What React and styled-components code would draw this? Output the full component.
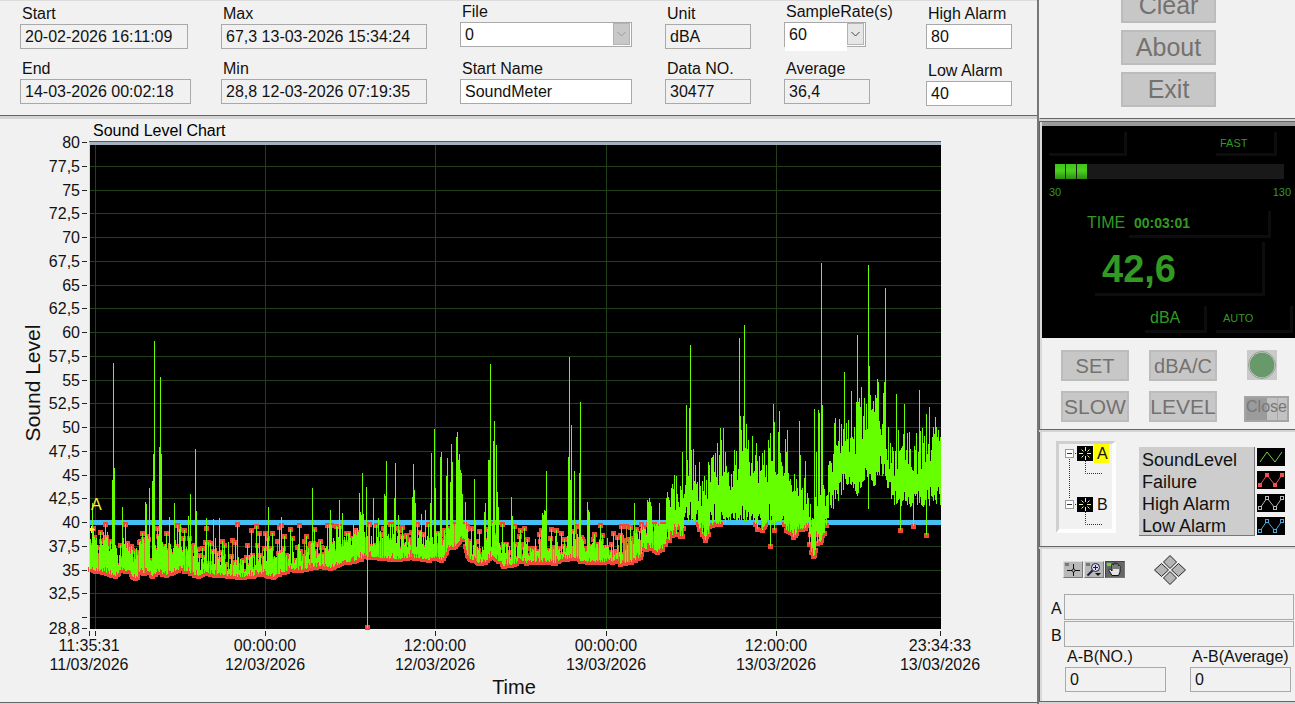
import React from "react";
import styled, { createGlobalStyle } from "styled-components";

const FONT = '"Liberation Sans", Arial, sans-serif';
const LINE_DARK = "#666666";

const GlobalStyle = createGlobalStyle`
  * { box-sizing: border-box; }
  html, body { margin: 0; padding: 0; }
  body { background: #f1f1f1; overflow: hidden; font-family: ${FONT}; font-size: 16px; color: #111; }
  button, input, select { font-family: inherit; color: inherit; margin: 0; border-radius: 0; }
`;

/* ---------- page frame ---------- */

const Page = styled.div`
  display: grid;
  grid-template-columns: minmax(0, 1fr) 256px;
  min-height: 100vh;
  background: #d4d4d4;
`;

const MainColumn = styled.main`
  display: flex;
  flex-direction: column;
  gap: 3px;
  min-width: 0;
  border-right: 2px solid #777;
`;

const SideColumn = styled.aside`
  display: flex;
  flex-direction: column;
  gap: 2px;
  min-width: 0;
`;

/* ---------- header ---------- */

const Header = styled.form`
  display: grid;
  grid-template-columns: 201fr 239fr 205fr 119fr 142fr 111fr;
  height: 116px;
  padding-left: 20px;
  background: #f1f1f1;
  border-top: 1px solid #dcdcdc;
  border-bottom: 1px solid ${LINE_DARK};
`;

const FieldColumn = styled.div`
  display: flex;
  flex-direction: column;
  align-items: flex-start;
  gap: ${(p) => p.$gap || 11}px;
  padding-top: ${(p) => p.$top || 4}px;
`;

const FieldGroup = styled.label`
  display: flex;
  flex-direction: column;
  gap: 1px;
  line-height: 18px;
  white-space: nowrap;
`;

const FieldName = styled.span`
  padding-left: 2px;
`;

const TextBox = styled.input`
  width: ${(p) => p.$w || 86}px;
  height: 25px;
  padding: 0 4px;
  border: 1px solid #a9a9a9;
  background: ${(p) => (p.readOnly ? "#f1f1f1" : "#fff")};
  font-size: 16px;
  outline: none;
`;

const SelectFrame = styled.span`
  display: grid;
  align-items: start;
  width: ${(p) => p.$w}px;
  height: 25px;
  border: 1px solid #a9a9a9;
  background: #fff;
`;

const SelectBox = styled.select`
  grid-area: 1 / 1;
  width: ${(p) => p.$w}px;
  height: ${(p) => p.$h}px;
  padding: 0 4px ${(p) => p.$h - 23}px;
  border: 0;
  background: #fff;
  appearance: none;
  font-size: 16px;
  line-height: 20px;
  opacity: 1;
  color: #111;
`;

const SelectArrow = styled.span`
  grid-area: 1 / 1;
  justify-self: end;
  display: flex;
  align-items: center;
  justify-content: center;
  width: 17px;
  height: 22px;
  margin-right: 1px;
  border: 1px solid #b4b4b4;
  background: ${(p) => (p.$off ? "#c8c8c8" : "#e6e6e6")};
  color: ${(p) => (p.$off ? "#999" : "#444")};
  pointer-events: none;
`;

function Field({ label, value, width, editable }) {
  return (
    <FieldGroup>
      <FieldName>{label}</FieldName>
      <TextBox $w={width} defaultValue={value} readOnly={!editable} />
    </FieldGroup>
  );
}

function SelectField({ label, value, width, selectWidth, selectHeight, off }) {
  return (
    <FieldGroup>
      <FieldName>{label}</FieldName>
      <SelectFrame $w={width}>
        <SelectBox $w={selectWidth} $h={selectHeight} defaultValue={value} disabled={off}>
          <option>{value}</option>
        </SelectBox>
        <SelectArrow $off={off}>
          <svg width="9" height="6" viewBox="0 0 9 6" fill="none" stroke="currentColor">
            <path d="M0.5 1L4.5 5L8.5 1" />
          </svg>
        </SelectArrow>
      </SelectFrame>
    </FieldGroup>
  );
}

/* ---------- chart ---------- */

const ChartPanel = styled.section`
  background: #f1f1f1;
  border-bottom: 1px solid ${LINE_DARK};
`;

const ChartSvg = styled.svg`
  display: block;
  width: 100%;
  height: auto;
  font-family: ${FONT};
  font-size: 16px;
`;

const Y_LABELS = [
  "80", "77,5", "75", "72,5", "70", "67,5", "65", "62,5", "60", "57,5", "55",
  "52,5", "50", "47,5", "45", "42,5", "40", "37,5", "35", "32,5",
];

const X_LABELS = [
  { x: 89, tick: 90, time: "11:35:31", date: "11/03/2026" },
  { x: 265, tick: 265, time: "00:00:00", date: "12/03/2026" },
  { x: 435, tick: 435, time: "12:00:00", date: "12/03/2026" },
  { x: 606, tick: 606, time: "00:00:00", date: "13/03/2026" },
  { x: 776, tick: 776, time: "12:00:00", date: "13/03/2026" },
  { x: 940, tick: 940, time: "23:34:33", date: "13/03/2026" },
];

/* quietest reading over time, as x, y pairs */
const FLOOR = [
  90,571, 100,571, 107,574, 115,576, 122,571, 130,576, 136,578, 142,574, 148,571, 152,576,
  158,572, 165,575, 172,573, 180,570, 190,573, 197,577, 205,573, 212,575, 222,575, 235,577,
  245,578, 255,576, 262,574, 272,578, 280,574, 290,571, 300,570, 310,568, 320,567, 330,568,
  340,564, 350,562, 360,559, 367,557, 375,558, 382,559, 392,559, 400,560, 410,558, 420,558,
  427,562, 433,558, 442,560, 447,550, 455,546, 460,540, 463,538, 467,556, 473,562, 480,564,
  485,563, 492,556, 497,560, 503,566, 512,565, 520,561, 525,563, 545,562, 555,563, 560,561,
  570,558, 580,561, 590,562, 600,563, 610,562, 620,564, 628,563, 635,560, 641,557, 643,550,
  650,548, 657,552, 665,548, 670,538, 676,536, 681,541, 685,523, 695,521, 699,532, 706,543,
  710,526, 720,525, 730,520, 740,524, 752,520, 757,524, 764,528, 768,524, 780,522, 785,527,
  792,538, 798,533, 806,527, 809,550, 813,559, 816,546, 822,543, 826,530, 829,512, 835,508,
  840,498, 845,484, 850,486, 857,496, 863,483, 868,482, 873,488, 880,478, 884,477, 888,495,
  893,505, 900,507, 905,503, 910,511, 918,504, 925,509, 929,509, 933,503, 940,506,
];

/* height of the solid body of the trace */
const BODY = [
  90,545, 93,537, 98,552, 106,540, 112,545, 118,556, 125,540, 135,558, 145,535, 151,555,
  160,545, 170,552, 178,540, 184,556, 190,540, 200,562, 215,556, 230,564, 250,564, 265,556,
  280,554, 290,556, 310,550, 320,552, 335,543, 345,542, 360,532, 368,540, 380,540, 392,540,
  405,542, 415,538, 430,542, 442,538, 452,522, 460,512, 464,526, 468,546, 480,550, 490,538,
  498,544, 510,550, 530,552, 545,546, 560,550, 572,538, 590,546, 610,550, 630,544, 645,530,
  655,532, 665,516, 670,498, 680,490, 688,478, 695,474, 700,496, 706,485, 715,472, 722,462,
  730,478, 737,466, 745,460, 755,468, 762,464, 775,468, 790,474, 800,486, 808,508, 813,517,
  818,500, 825,492, 830,470, 838,450, 845,438, 855,444, 861,422, 870,420, 880,420, 886,442,
  893,466, 903,452, 915,460, 925,456, 933,440, 940,445,
];

/* readings that stand clear of the body, as x, y pairs */
const PEAKS = [
  92,503, 113,363, 112,480, 114,468, 122,507, 145,502, 146,504, 149,488, 152,481, 153,454,
  154,341, 159,447, 160,377, 161,454, 169,517, 174,503, 188,516, 190,494, 195,449, 196,511,
  206,518, 213,519, 219,518, 268,507, 281,517, 312,488, 330,510, 339,500, 342,513, 359,493,
  360,512, 361,515, 362,473, 363,514, 366,487, 373,498, 378,518, 384,494, 385,496, 386,461,
  394,498, 395,463, 398,515, 412,497, 413,464, 414,490, 415,503, 421,514, 425,510, 430,503,
  431,453, 434,429, 435,488, 440,457, 441,452, 446,476, 447,458, 450,482, 451,444, 452,462,
  456,437, 457,432, 458,460, 459,454, 460,470, 461,473, 462,494, 465,502, 474,479, 475,520,
  484,512, 485,503, 488,460, 489,460, 490,364, 493,441, 494,421, 496,445, 497,492, 498,507,
  511,497, 512,516, 542,513, 543,515, 544,510, 545,511, 546,471, 568,457, 569,357, 570,480,
  571,425, 574,471, 579,473, 580,402, 587,502, 588,510, 589,512, 634,503, 647,500, 648,502,
  649,498, 650,502, 651,506, 659,503, 667,492, 674,475, 676,476, 686,405, 687,460, 689,408,
  690,345, 691,450, 693,449, 695,465, 699,462, 711,458, 713,455, 715,453, 717,443, 720,428,
  721,440, 723,428, 726,466, 736,451, 739,338, 740,416, 741,430, 743,416, 744,325, 745,448,
  746,424, 747,449, 752,436, 756,443, 762,453, 764,450, 768,440, 770,433, 773,404, 774,422,
  778,432, 779,411, 785,439, 787,430, 799,421, 800,455, 805,461, 814,409, 816,452, 818,410,
  819,413, 821,263, 822,405, 834,423, 835,418, 839,419, 841,424, 844,372, 848,420, 851,391,
  857,335, 858,402, 859,398, 861,387, 864,398, 866,404, 868,265, 869,366, 870,395, 875,395,
  877,379, 878,382, 883,393, 884,382, 885,288, 888,427, 896,394, 898,430, 904,404, 907,433,
  915,450, 919,390, 922,428, 924,436, 926,414, 929,407, 933,427, 936,427, 938,430, 940,437,
];

/* single dips below the floor */
const DIPS = [
  367,628, 725,523, 755,524, 757,529, 762,530, 770,546, 774,530, 786,530, 868,509, 900,530, 913,526, 926,535,
];

/* isolated failure markers above the body */
const MARKS = [
  93,528, 100,532, 105,524, 125,524, 157,528, 166,533, 177,525, 184,530, 206,528, 208,542, 224,545,
  237,524, 251,530, 256,526, 259,533, 265,533, 267,538, 272,533, 279,527, 281,525, 290,529, 292,538,
  299,525, 306,536, 311,543, 320,541, 327,525, 331,525, 340,526, 348,533, 356,535, 376,525, 383,528,
  390,524, 398,528, 409,539, 417,524, 428,524, 430,540, 441,534, 448,528, 454,526, 467,526, 471,528,
  479,531, 487,529, 492,523, 502,524, 514,526, 520,530, 524,528, 527,539, 539,534, 551,529, 556,530,
  561,533, 564,539, 576,526, 581,537, 594,534, 600,525, 602,535, 613,533, 621,526, 626,526, 630,527,
  636,529, 641,524, 643,527, 648,524, 654,524, 661,524,
];

function interpolate(points, x) {
  for (let i = 0; i < points.length - 2; i += 2) {
    if (x <= points[i + 2]) {
      const t = Math.max(0, (x - points[i]) / (points[i + 2] - points[i]));
      return points[i + 1] + t * (points[i + 3] - points[i + 1]);
    }
  }
  return points[points.length - 1];
}

function toMap(points) {
  const map = new Map();
  for (let i = 0; i < points.length; i += 2) map.set(points[i], points[i + 1]);
  return map;
}

function buildTrace() {
  let seed = 20260311;
  const random = () => {
    seed = (seed * 1664525 + 1013904223) % 4294967296;
    return seed / 4294967296;
  };
  const peaks = toMap(PEAKS);
  const dips = toMap(DIPS);
  const marks = toMap(MARKS);
  const square = (x, y) => `M${x - 2} ${Math.round(y) - 2}h5v5h-5z`;
  let green = "";
  let streaks = "";
  let failure = "";
  for (let x = 90; x <= 940; x += 1) {
    const loud = x > 664;
    const floor = interpolate(FLOOR, x);
    const body = interpolate(BODY, x);
    let top = body + (random() - 0.5) * (loud ? 34 : 18);
    if (random() > 0.82) top -= random() * (loud ? 26 : 22);
    let bottom = floor - random() * random() * (loud ? 24 : 8);
    if (!loud) top = Math.max(top, 524);
    top = Math.min(top, bottom - 5);
    const marked = marks.has(x);
    if (marked) top = marks.get(x);
    if (peaks.has(x)) top = peaks.get(x);
    if (dips.has(x)) bottom = dips.get(x);
    top = Math.round(top);
    bottom = Math.round(bottom);
    if (bottom > 523) failure += square(x, Math.min(bottom, 627));
    if (marked || (top > 522 && random() > 0.4)) failure += square(x, marked ? marks.get(x) : top);
    if (random() > 0.88 && top > 524) streaks += `M${x} ${top}h1V${bottom}h-1z`;
    else green += `M${x} ${top}h1V${bottom}h-1z`;
  }
  return { green, streaks, failure };
}

const TRACE = buildTrace();

function SoundChart() {
  return (
    <ChartSvg viewBox="0 119 1037 583" role="img" aria-label="Sound Level Chart">
      <text x="93" y="136">Sound Level Chart</text>
      <rect x="89" y="141" width="852" height="488" fill="#000" />
      <g fill="#24401a">
        {Array.from({ length: 20 }, (_, i) => (
          <rect key={i} x="90" y={Math.round(142 + (i + 1) * 23.75)} width="851" height="1" />
        ))}
        {[95, 265, 435, 606, 776].map((x) => (
          <rect key={x} x={x} y="145" width="1" height="484" />
        ))}
      </g>
      <rect x="89" y="141" width="852" height="1" fill="#4a5f62" />
      <rect x="90" y="142" width="851" height="3" fill="#a3b2be" />
      <rect x="90" y="520" width="851" height="5" fill="#45c0f7" />
      <g shapeRendering="crispEdges">
        <path d={TRACE.failure} fill="#f0493c" />
        <path d={TRACE.streaks} fill="#c98a25" />
        <path d={TRACE.green} fill="#66ff00" />
      </g>
      <rect x="89" y="142" width="1" height="487" fill="#e8e84a" />
      <g stroke="#f4f032" fill="none">
        <path d="M89 529.5H95M91.5 526V533" />
        <rect x="90.500" y="528.500" width="2" height="2" />
      </g>
      <text x="91" y="510" fill="#f4f032">A</text>

      <g textAnchor="end" fill="#111">
        {Y_LABELS.map((label, i) => (
          <text key={label} x="80" y={Math.round(142 + i * 23.75) + 6}>{label}</text>
        ))}
        <text x="80" y="634">28,8</text>
      </g>
      <g fill="#222">
        {Array.from({ length: 21 }, (_, i) => (
          <rect key={i} x="82" y={Math.round(142 + i * 23.75)} width="5" height="1" />
        ))}
        <rect x="82" y="628" width="5" height="1" />
        <rect x="95" y="631" width="1" height="5" />
        {X_LABELS.map((l) => (
          <rect key={l.tick} x={l.tick - (l.tick === 90 ? 1 : 0)} y="631" width="1" height="5" />
        ))}
      </g>
      <g textAnchor="middle" fill="#111">
        {X_LABELS.map((l) => (
          <React.Fragment key={l.x}>
            <text x={l.x} y="651">{l.time}</text>
            <text x={l.x} y="670">{l.date}</text>
          </React.Fragment>
        ))}
        <text x="514" y="694" fontSize="20">Time</text>
        <text transform="translate(40 383) rotate(-90)" fontSize="21">Sound Level</text>
      </g>
    </ChartSvg>
  );
}

/* ---------- side panels ---------- */

const SidePanel = styled.section`
  background: #f1f1f1;
  border-bottom: 1px solid ${LINE_DARK};
  border-left: 1px solid ${LINE_DARK};
  box-shadow: inset 2px 0 0 #dadada;
`;

const ActionPanel = styled(SidePanel)`
  display: flex;
  flex-direction: column;
  justify-content: flex-end;
  align-items: center;
  gap: 7px;
  height: 119px;
  padding: 0 0 11px 2px;
  border-left-color: #f1f1f1;
  box-shadow: none;
  overflow: hidden;
`;

const GrayButton = styled.button`
  display: flex;
  align-items: center;
  justify-content: center;
  flex: none;
  width: ${(p) => p.$w}px;
  height: ${(p) => p.$h}px;
  padding: 0;
  border: 2px solid #bcbcbc;
  background: #c8c7c7;
  color: #74726f;
  font-size: ${(p) => p.$size}px;
  line-height: 1;
`;

const MeterPanel = styled(SidePanel)`
  border-top: 1px solid ${LINE_DARK};
  padding-left: 2px;
  height: 309px;
`;

const MeterScreen = styled.div`
  height: 216px;
  padding: 6px 2px 0 7px;
  border-top: 4px solid #9a9a9a;
  background: #000;
  color: #329a22;
`;

const MeterRow = styled.div`
  display: flex;
  align-items: center;
  justify-content: space-between;
  height: ${(p) => p.$h}px;
  padding: 0 ${(p) => p.$right || 0}px 0 ${(p) => p.$left || 0}px;
  margin-top: ${(p) => p.$top || 0}px;
`;

const Readout = styled.output`
  display: flex;
  align-items: center;
  width: ${(p) => p.$w}px;
  height: 100%;
  padding-top: ${(p) => p.$drop || 0}px;
  padding-left: ${(p) => p.$pad || 4}px;
  border-right: 3px solid #0d0d0d;
  border-bottom: 3px solid #0d0d0d;
  font-size: ${(p) => p.$size}px;
  font-weight: ${(p) => (p.$bold ? "bold" : "normal")};
`;

const LevelBar = styled.div`
  display: flex;
  gap: 1px;
  height: 15px;
  margin: 8px 9px 0 6px;
  background: #191919;
`;

const LevelCell = styled.span`
  width: 10px;
  background: linear-gradient(#3fc41a, #4cd020 45%, #2b8f10);
`;

const Caption = styled.span`
  padding-bottom: ${(p) => p.$lift || 0}px;
  font-size: ${(p) => p.$size}px;
`;

const ControlGrid = styled.div`
  display: grid;
  grid-template-columns: 68px 68px 52px;
  grid-template-rows: 31px 31px;
  gap: 10px 20px;
  padding: 12px 0 0 19px;
`;

const RoundButton = styled.button`
  justify-self: start;
  width: 30px;
  height: 30px;
  margin-left: 10px;
  padding: 0;
  border: 0;
  background: #cacaca;
`;

const CloseButton = styled.button`
  align-self: end;
  justify-self: end;
  width: 45px;
  height: 26px;
  padding: 0 0 4px;
  border: 2px solid #a5a5a5;
  background: linear-gradient(90deg, #9b9b9b 0 50%, #c2c2c2 50% 76%, #aaa 76% 78%, #c2c2c2 78%);
  color: #777;
  font-size: 16px;
`;

const LegendPanel = styled(SidePanel)`
  display: flex;
  align-items: flex-start;
  height: 115px;
  padding: 9px 9px 0 16px;
`;

const TreeSvg = styled.svg`
  display: block;
  flex: none;
  font-family: ${FONT};
  font-size: 16px;
`;

const LegendNames = styled.ul`
  width: 116px;
  height: 89px;
  margin: 6px 2px 0 23px;
  padding: 2px 0 0 3px;
  list-style: none;
  background: #cdcdcd;
  border-right: 1px solid #777;
  border-bottom: 1px solid #777;
  font-size: 18px;
  line-height: 22px;
  white-space: nowrap;
`;

const LegendIcons = styled.div`
  display: flex;
  flex-direction: column;
  gap: 5px;
  margin-top: 7px;
`;

const LegendSvg = styled.svg`
  display: block;
  width: 28px;
  height: 18px;
  background: #000;
`;

const CursorPanel = styled(SidePanel)`
  height: 153px;
  padding: 5px 1px 0 11px;
`;

const ToolRow = styled.div`
  display: flex;
  align-items: center;
  gap: 1px;
  height: 31px;
  padding-left: 12px;
`;

const ToolButton = styled.button`
  width: 20px;
  height: 17px;
  padding: 0;
  border: 1px solid;
  border-color: ${(p) => (p.$pressed ? "#444 #777 #777 #444" : "#dedede #777 #777 #dedede")};
  background: ${(p) => (p.$pressed ? "#666" : "#b9b9b9")};
  svg { display: block; }
`;

const PanButton = styled.button`
  width: 32px;
  height: 30px;
  margin-left: 28px;
  padding: 0;
  border: 0;
  background: none;
  svg { display: block; }
`;

const CursorRow = styled.label`
  display: flex;
  align-items: flex-end;
  gap: 2px;
  margin-top: ${(p) => p.$top}px;
  line-height: 22px;
`;

const CursorBox = styled.input`
  flex: 1;
  min-width: 0;
  height: 26px;
  padding: 0 4px;
  border: 1px solid #a9a9a9;
  background: #f1f1f1;
  font-size: 16px;
  outline: none;
`;

const DiffRow = styled.div`
  display: flex;
  justify-content: space-between;
  padding: 1px 3px 0 14px;
`;

/* ---------- drawings ---------- */

function TreeNode({ y, name, active }) {
  return (
    <g>
      <rect x="9.500" y={y + 7.5} width="8" height="8" fill="#fff" stroke="#999" />
      <path d={`M11 ${y + 11.5}H16`} stroke="#333" />
      <rect x="21" y={y + 4} width="16" height="15" fill="#000" />
      <path
        d={`M23 ${y + 11.5}H27M31 ${y + 11.5}H35M29.500 ${y + 5}V${y + 9}M29.500 ${y + 14}V${y + 18}M25.500 ${y + 7.5}l2 2M33.500 ${y + 7.5}l-2 2M25.500 ${y + 15.5}l2 -2M33.500 ${y + 15.5}l-2 -2`}
        stroke="#f2f28a"
        fill="none"
      />
      <path d={`M29.500 ${y + 19}V${y + 31.5}H46`} stroke="#333" strokeDasharray="1 1" fill="none" />
      {active && <rect x="38" y={y + 2} width="15" height="19" fill="#ffff00" />}
      <text x="41" y={y + 17} fill="#111">{name}</text>
    </g>
  );
}

function CursorTree() {
  return (
    <TreeSvg width="60" height="92" viewBox="0 0 60 92" role="img" aria-label="Cursors">
      <rect width="60" height="92" fill="#fdfdfd" />
      <path d="M0 92V0H60L56 3H3V88Z" fill="#cfcfcf" />
      <rect x="3" y="3" width="53" height="85" fill="#f1f1f1" />
      <path d="M13.500 16V58M17 12.500H21M17 63.500H21" stroke="#333" strokeDasharray="1 1" />
      <TreeNode y={1} name="A" active />
      <TreeNode y={52} name="B" />
    </TreeSvg>
  );
}

function LegendIcon({ color, marks }) {
  const points = [[3, 14], [10, 4], [18, 14], [25, 4]];
  return (
    <LegendSvg viewBox="0 0 28 18">
      <path d="M3 14L10 4L18 14L25 4" stroke={color} fill="none" />
      {marks &&
        points.map(([x, y]) => (
          <rect
            key={x}
            x={x - 1.5}
            y={y - 1.5}
            width="3"
            height="3"
            stroke={color}
            fill={marks === "solid" ? color : "#000"}
          />
        ))}
    </LegendSvg>
  );
}

const LEGEND = [
  { name: "SoundLevel", color: "#6fd23c" },
  { name: "Failure", color: "#f05050", marks: "solid" },
  { name: "High Alarm", color: "#b8b8b8", marks: "open" },
  { name: "Low Alarm", color: "#4da6dc", marks: "open" },
];

/* ---------- application ---------- */

export default function App() {
  return (
    <Page>
      <GlobalStyle />
      <MainColumn>
        <Header>
          <FieldColumn>
            <Field label="Start" value="20-02-2026 16:11:09" width={168} />
            <Field label="End" value="14-03-2026 00:02:18" width={171} />
          </FieldColumn>
          <FieldColumn>
            <Field label="Max" value="67,3 13-03-2026 15:34:24" width={206} />
            <Field label="Min" value="28,8 12-03-2026 07:19:35" width={206} />
          </FieldColumn>
          <FieldColumn $top={2} $gap={13}>
            <SelectField label="File" value="0" width={172} selectWidth={150} selectHeight={23} off />
            <Field label="Start Name" value="SoundMeter" width={172} editable />
          </FieldColumn>
          <FieldColumn>
            <Field label="Unit" value="dBA" />
            <Field label="Data NO." value="30477" />
          </FieldColumn>
          <FieldColumn $top={2} $gap={13}>
            <SelectField label="SampleRate(s)" value="60" width={82} selectWidth={62} selectHeight={28} />
            <Field label="Average" value="36,4" />
          </FieldColumn>
          <FieldColumn $gap={13}>
            <Field label="High Alarm" value="80" editable />
            <Field label="Low Alarm" value="40" editable />
          </FieldColumn>
        </Header>
        <ChartPanel>
          <SoundChart />
        </ChartPanel>
      </MainColumn>

      <SideColumn>
        <ActionPanel>
          <GrayButton $w={95} $h={35} $size={25}>Clear</GrayButton>
          <GrayButton $w={95} $h={35} $size={25}>About</GrayButton>
          <GrayButton $w={95} $h={35} $size={25}>Exit</GrayButton>
        </ActionPanel>

        <MeterPanel>
          <MeterScreen>
            <MeterRow $h={24} $right={16}>
              <Readout $w={78} $size={11} />
              <Readout $w={61} $size={11}>FAST</Readout>
            </MeterRow>
            <LevelBar>
              <LevelCell />
              <LevelCell />
              <LevelCell />
            </LevelBar>
            <MeterRow $h={13} $top={6} $right={2}>
              <Caption $size={11}>30</Caption>
              <Caption $size={11}>130</Caption>
            </MeterRow>
            <MeterRow $h={27} $top={13} $left={38} $right={22}>
              <Caption $size={16} $lift={4}>TIME</Caption>
              <Readout $w={142} $size={14} $pad={5} $bold>00:03:01</Readout>
            </MeterRow>
            <MeterRow $h={54} $top={4} $left={46} $right={28}>
              <Readout $w={170} $size={38} $pad={7} $drop={4} $bold>42,6</Readout>
            </MeterRow>
            <MeterRow $h={27} $top={10} $left={96}>
              <Readout $w={62} $size={16} $pad={5}>dBA</Readout>
              <Readout $w={77} $size={11} $pad={7}>AUTO</Readout>
            </MeterRow>
          </MeterScreen>
          <ControlGrid>
            <GrayButton $w={68} $h={31} $size={20}>SET</GrayButton>
            <GrayButton $w={68} $h={31} $size={20}>dBA/C</GrayButton>
            <RoundButton aria-label="Status">
              <svg width="30" height="30" viewBox="0 0 30 30">
                <circle cx="15" cy="15" r="13.500" fill="#e3e3e3" stroke="#999" />
                <circle cx="15" cy="15" r="12.500" fill="#67996a" />
              </svg>
            </RoundButton>
            <GrayButton $w={68} $h={31} $size={21}>SLOW</GrayButton>
            <GrayButton $w={68} $h={31} $size={21}>LEVEL</GrayButton>
            <CloseButton>Close</CloseButton>
          </ControlGrid>
        </MeterPanel>

        <LegendPanel>
          <CursorTree />
          <LegendNames>
            {LEGEND.map((item) => (
              <li key={item.name}>{item.name}</li>
            ))}
          </LegendNames>
          <LegendIcons>
            {LEGEND.map((item) => (
              <LegendIcon key={item.name} color={item.color} marks={item.marks} />
            ))}
          </LegendIcons>
        </LegendPanel>

        <CursorPanel>
          <ToolRow>
            <ToolButton aria-label="Cursor">
              <svg width="18" height="15" viewBox="0 0 18 15" fill="none" stroke="#111">
                <rect x="1" y="1" width="4" height="3" fill="#777" stroke="none" />
                <path d="M3 8.500H8M11 8.500H16M9.500 2V7M9.500 10V14" />
                <circle cx="9.500" cy="8.500" r="1.500" />
              </svg>
            </ToolButton>
            <ToolButton aria-label="Zoom">
              <svg width="18" height="15" viewBox="0 0 18 15" fill="none" stroke="#1c1c3c">
                <rect x="1" y="1" width="4" height="3" fill="#777" stroke="none" />
                <circle cx="10.500" cy="5.500" r="4" fill="#dcdcf0" />
                <path d="M8 5.500H13M10.500 3V8" />
                <path d="M7.500 8.500L2.500 13.500" strokeWidth="2" />
                <path d="M10 11H16L13 14Z" fill="#111" stroke="none" />
              </svg>
            </ToolButton>
            <ToolButton aria-label="Pan" $pressed>
              <svg width="18" height="15" viewBox="0 0 18 15">
                <rect x="1" y="1" width="4" height="3" fill="#5fe02c" />
                <path
                  d="M6 13.500L3 8.500C2.500 7 4 6.500 5 8L6 9V3C6 1.500 8 1.500 8 3V2C8 0.500 10 0.500 10 2V2.500C10 1 12 1 12 2.500V4C12 3 14 3 14 4.500V10L12.500 13.500Z"
                  fill="#e4e4e4"
                  stroke="#111"
                />
                <path d="M8 3V7M10 2.500V7M12 4V7" stroke="#111" />
              </svg>
            </ToolButton>
            <PanButton aria-label="Pan plot">
              <svg width="32" height="30" viewBox="0 0 32 30" fill="#b5b5b5" stroke="#222">
                <path d="M16 0.500L22.500 7L16 13.500L9.500 7Z" />
                <path d="M16 16.500L22.500 23L16 29.500L9.500 23Z" />
                <path d="M7.500 8.500L14.500 15L7.500 21.500L0.500 15Z" />
                <path d="M24.500 8.500L31.500 15L24.500 21.500L17.500 15Z" />
              </svg>
            </PanButton>
          </ToolRow>
          <CursorRow $top={9}>
            A
            <CursorBox readOnly />
          </CursorRow>
          <CursorRow $top={1}>
            B
            <CursorBox readOnly />
          </CursorRow>
          <DiffRow>
            <Field label="A-B(NO.)" value="0" width={101} />
            <Field label="A-B(Average)" value="0" width={101} />
          </DiffRow>
        </CursorPanel>
      </SideColumn>
    </Page>
  );
}
